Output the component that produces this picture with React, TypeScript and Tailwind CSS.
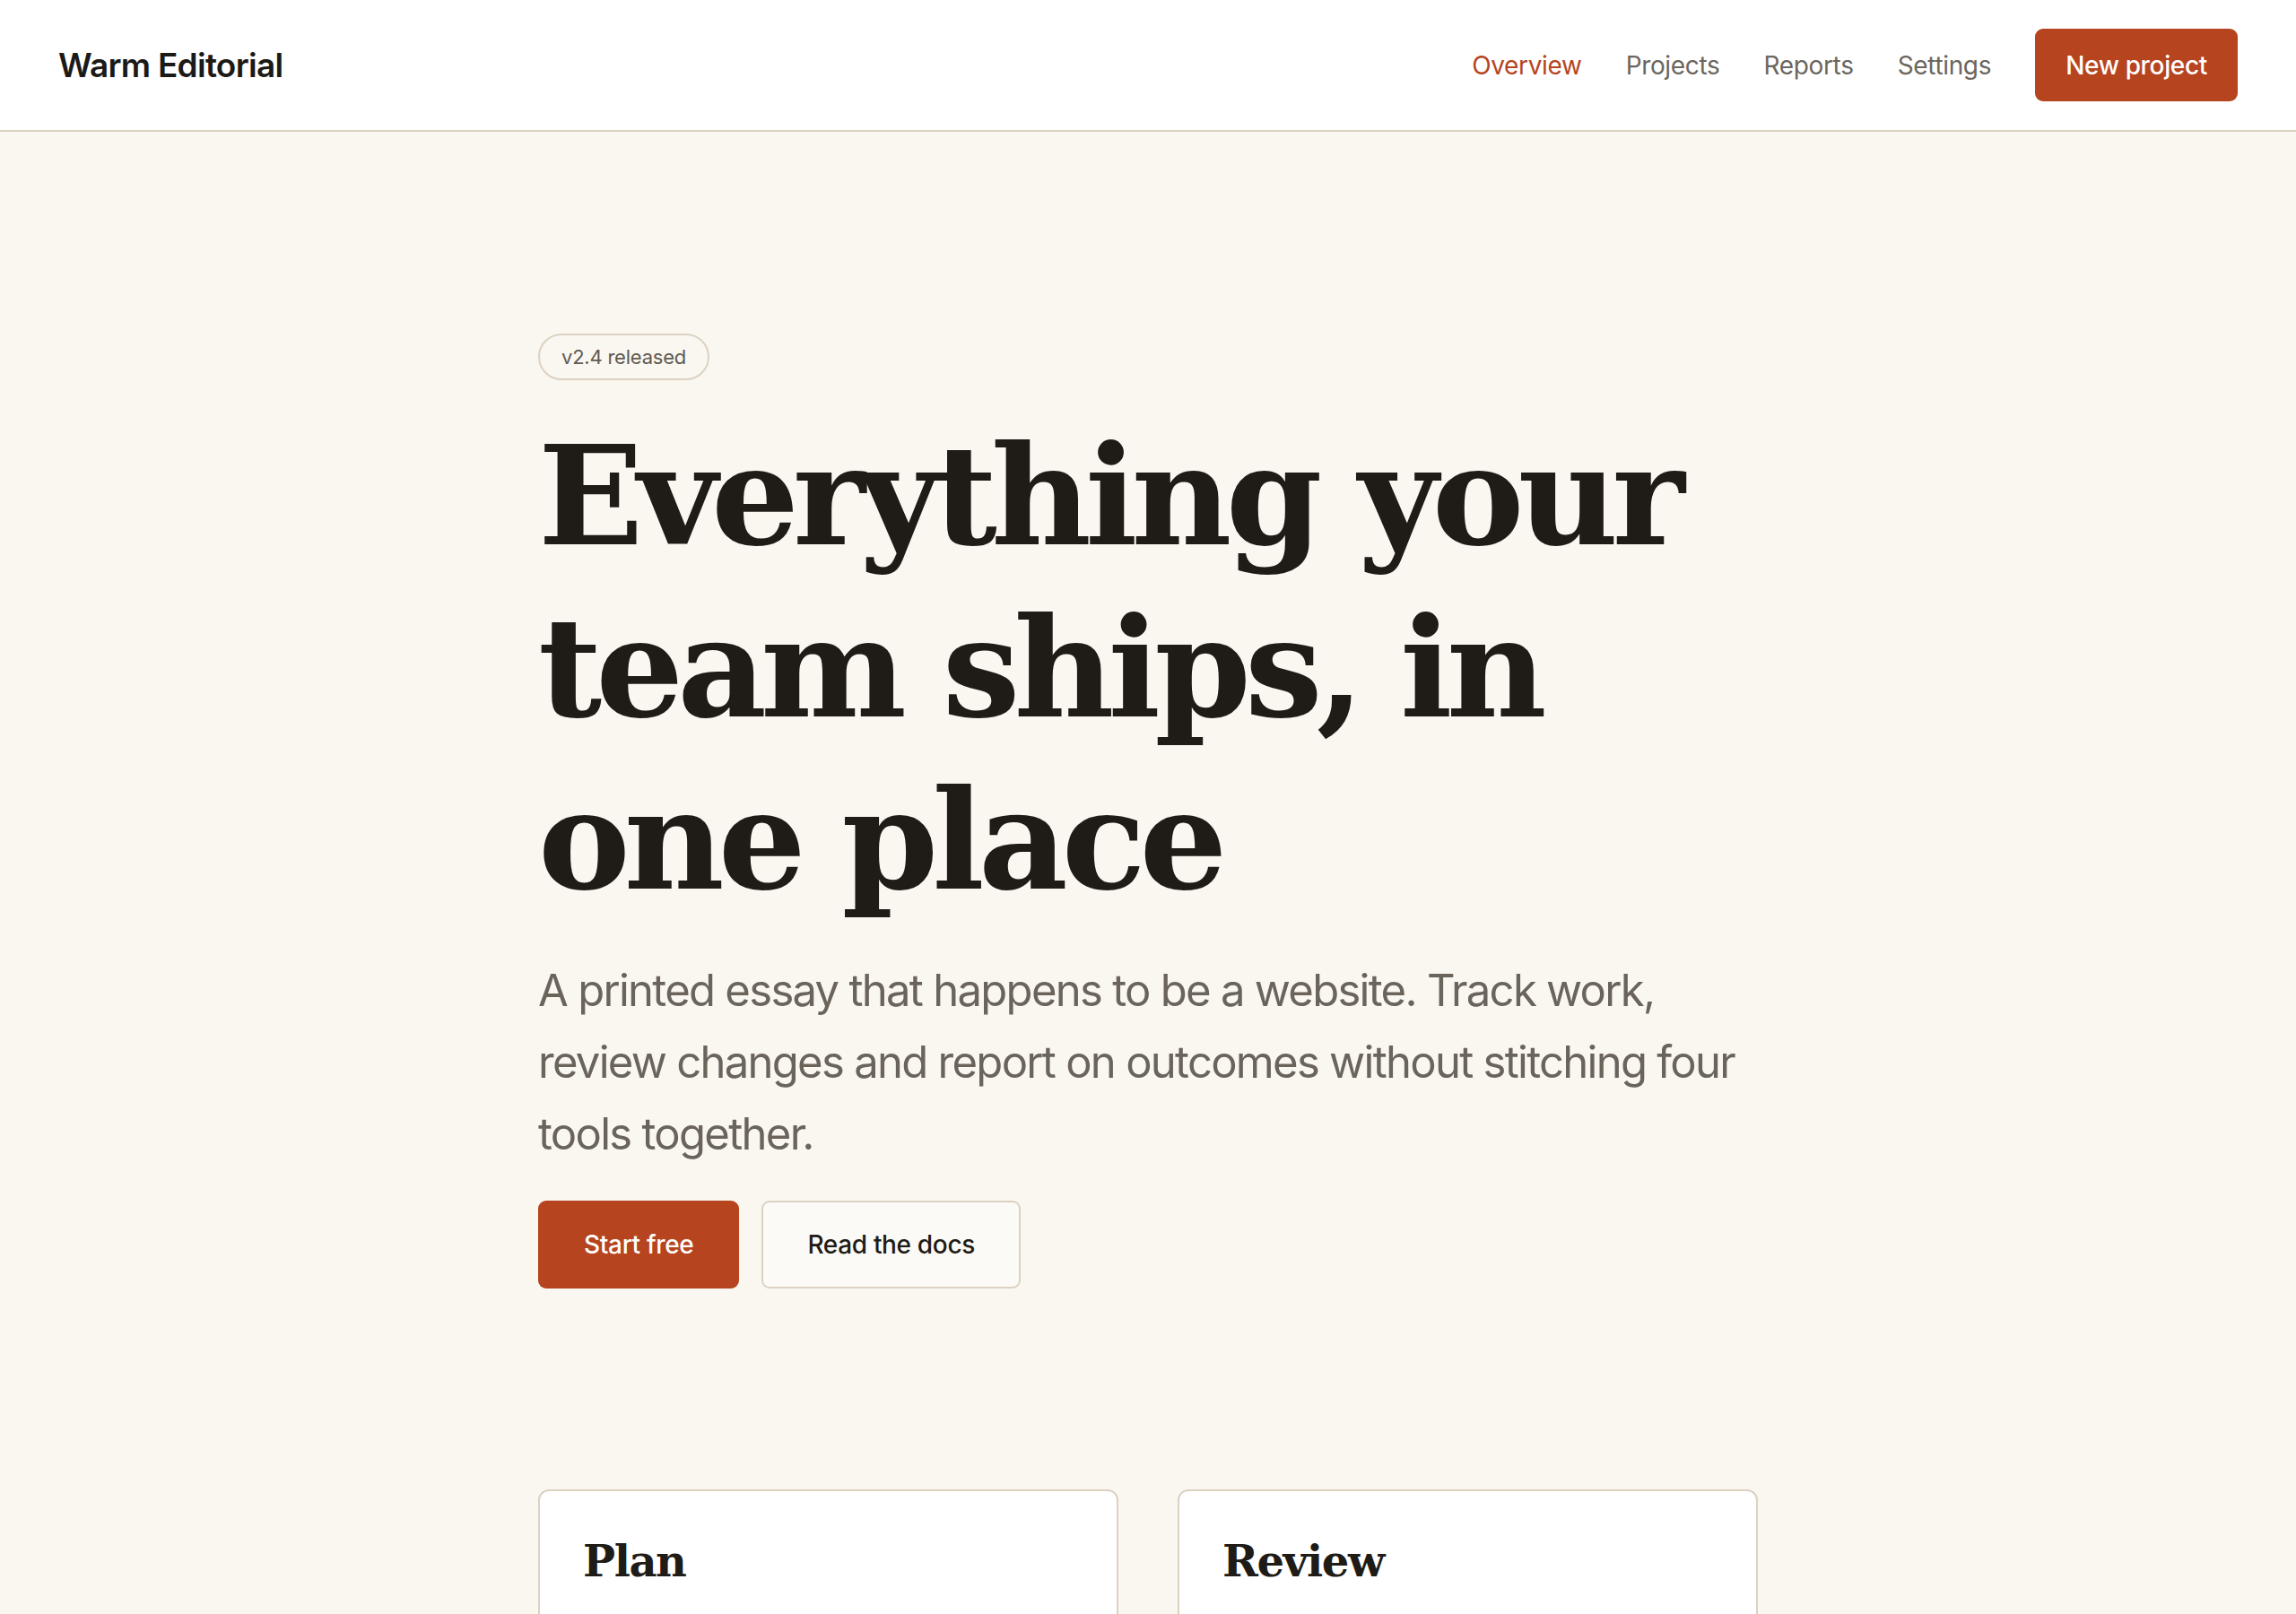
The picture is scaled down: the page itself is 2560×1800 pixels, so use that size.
import React from "react";

const NAV = ["Overview", "Projects", "Reports", "Settings"];

function Header() {
  return (
    <header className="border-b-2 border-[#dcd2c2] bg-white">
      <div className="flex items-center justify-between px-[65px] py-[32px]">
        <a className="text-[37px] font-semibold tracking-[-0.02em] text-[#1c1a17]">Warm Editorial</a>
        <nav className="flex items-center gap-[49px]">
          {NAV.map((item, i) => (
            <a
              key={item}
              className={`text-[28px] tracking-[-0.012em] ${i === 0 ? "text-[#b5441f]" : "text-[#6b665e]"}`}
            >
              {item}
            </a>
          ))}
          <button className="h-[81px] rounded-[9px] bg-[#b5441f] px-[34px] text-[28px] font-medium tracking-[-0.012em] text-white">
            New project
          </button>
        </nav>
      </div>
    </header>
  );
}

function Card({ title }: { title: string }) {
  return (
    <div className="rounded-[12px] border-2 border-[#dcd2c2] bg-white p-[48px]">
      <h3 className="font-['DejaVu_Serif',serif] text-[48px] leading-[60px] font-bold tracking-[-0.03em] text-[#1f1c17]">
        {title}
      </h3>
    </div>
  );
}

export default function App() {
  return (
    <div className="min-h-screen bg-[#faf7f1] font-['Inter',sans-serif]">
      <Header />
      <main className="mx-auto max-w-[1360px] pt-[225px] pb-[120px]">
        <span className="inline-flex h-[52px] items-center rounded-full border-2 border-[#dcd2c2] px-[24px] text-[22px] tracking-[-0.01em] text-[#5f5a52]">
          v2.4 released
        </span>
        <h1 className="mt-[33px] font-['DejaVu_Serif',serif] text-[154px] leading-[192px] font-bold tracking-[-0.045em] text-[#1f1c17]">
          Everything your team ships, in one place
        </h1>
        <p className="mt-[32px] text-[49px] leading-[80px] tracking-[-0.035em] text-[#6b645b]">
          A printed essay that happens to be a website. Track work, review changes and report on outcomes without stitching four tools together.
        </p>
        <div className="mt-[34px] flex gap-[25px]">
          <button className="h-[98px] rounded-[9px] bg-[#b5441f] px-[51px] text-[28px] font-medium tracking-[-0.012em] text-white">
            Start free
          </button>
          <button className="h-[98px] rounded-[9px] border-2 border-[#dcd2c2] bg-[#fcfaf6] px-[49px] text-[28px] font-medium tracking-[-0.012em] text-[#1f1c17]">
            Read the docs
          </button>
        </div>
        <div className="mt-[224px] grid grid-cols-2 gap-[66px]">
          <Card title="Plan" />
          <Card title="Review" />
        </div>
      </main>
    </div>
  );
}
